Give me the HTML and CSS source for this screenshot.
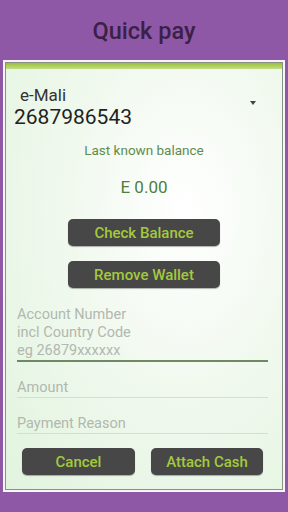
FILE: index.html
```html
<!DOCTYPE html>
<html>
<head>
    <title>Quick pay</title>
    <link rel="stylesheet" href="styles.css">
</head>
<body>
    <div class="header">Quick pay</div>
    <div class="panel">
        <div class="panel-inner">
            <div class="topbar"></div>
            <div class="wallet">
                <div class="wallet-info">
                    <div class="wallet-name">e-Mali</div>
                    <div class="wallet-number">2687986543</div>
                </div>
                <div class="caret"></div>
            </div>
            <p class="balance-label">Last known balance</p>
            <p class="balance">E 0.00</p>
            <div class="actions">
                <button class="button wide">Check Balance</button>
                <button class="button wide">Remove Wallet</button>
            </div>
            <div class="field active">Account Number<br>incl Country Code<br>eg 26879xxxxxx</div>
            <div class="field">Amount</div>
            <div class="field">Payment Reason</div>
            <div class="bottom-buttons">
                <button class="button cancel">Cancel</button>
                <button class="button attach">Attach Cash</button>
            </div>
        </div>
    </div>
</body>
</html>
```

FILE: styles.css
```css
body {
    margin: 0;
    padding: 0;
    width: 288px;
    height: 512px;
    background-color: #8f58a7;
    font-family: Roboto, "Noto Sans", sans-serif;
    overflow: hidden;
}

.header {
    height: 60px;
    line-height: 63px;
    text-align: center;
    font-size: 23.5px;
    font-weight: 500;
    color: #3b2048;
}

.panel {
    margin: 0 3px;
    height: 428px;
    border: 2px solid #f6f6f6;
}

.panel-inner {
    height: 426px;
    border: 1px solid #8a8f88;
    background: radial-gradient(ellipse at 65% 35%, #ffffff 0%, #f1f9ef 45%, #e1f4de 100%);
}

.topbar {
    height: 6px;
    background: linear-gradient(to bottom, #98c232, #c4dd8c);
}

.wallet {
    display: flex;
    align-items: center;
    padding: 16px 0 0 8px;
}

.wallet-info {
    flex: 1;
}

.wallet-name {
    font-size: 17px;
    line-height: 20px;
    color: #333;
    padding-left: 6px;
}

.wallet-number {
    font-size: 21px;
    line-height: 24px;
    color: #222;
}

.caret {
    width: 0;
    height: 0;
    border-left: 3px solid transparent;
    border-right: 3px solid transparent;
    border-top: 4px solid #444;
    margin: 0 26px 8px 0;
}

.balance-label {
    margin: 13px 0 0;
    text-align: center;
    font-size: 13.5px;
    line-height: 16px;
    color: #5f8c4c;
}

.balance {
    margin: 19px 0 0;
    text-align: center;
    font-size: 17px;
    line-height: 20px;
    color: #4f7e3e;
}

.actions {
    display: flex;
    flex-direction: column;
    align-items: center;
    gap: 15px;
    margin-top: 22px;
}

.button {
    display: inline-block;
    height: 27px;
    padding: 0;
    border: none;
    border-radius: 5px;
    background-color: #474747;
    color: #a4c93c;
    font-family: Roboto, "Noto Sans", sans-serif;
    font-size: 15px;
    font-weight: 500;
    box-shadow: 0 1px 1px rgba(0, 0, 0, 0.3);
}

.wide {
    width: 152px;
}

.cancel {
    width: 113px;
}

.attach {
    width: 112px;
}

.field {
    margin: 17px 14px 0 11px;
    font-size: 14.5px;
    line-height: 18px;
    color: #b1b8af;
    border-bottom: 1px solid #d3e4b9;
}

.field.active {
    margin-top: 18px;
    border-bottom: 2px solid #6e8a62;
}

.bottom-buttons {
    display: flex;
    justify-content: space-between;
    margin: 14px 19px 0 16px;
}
```
